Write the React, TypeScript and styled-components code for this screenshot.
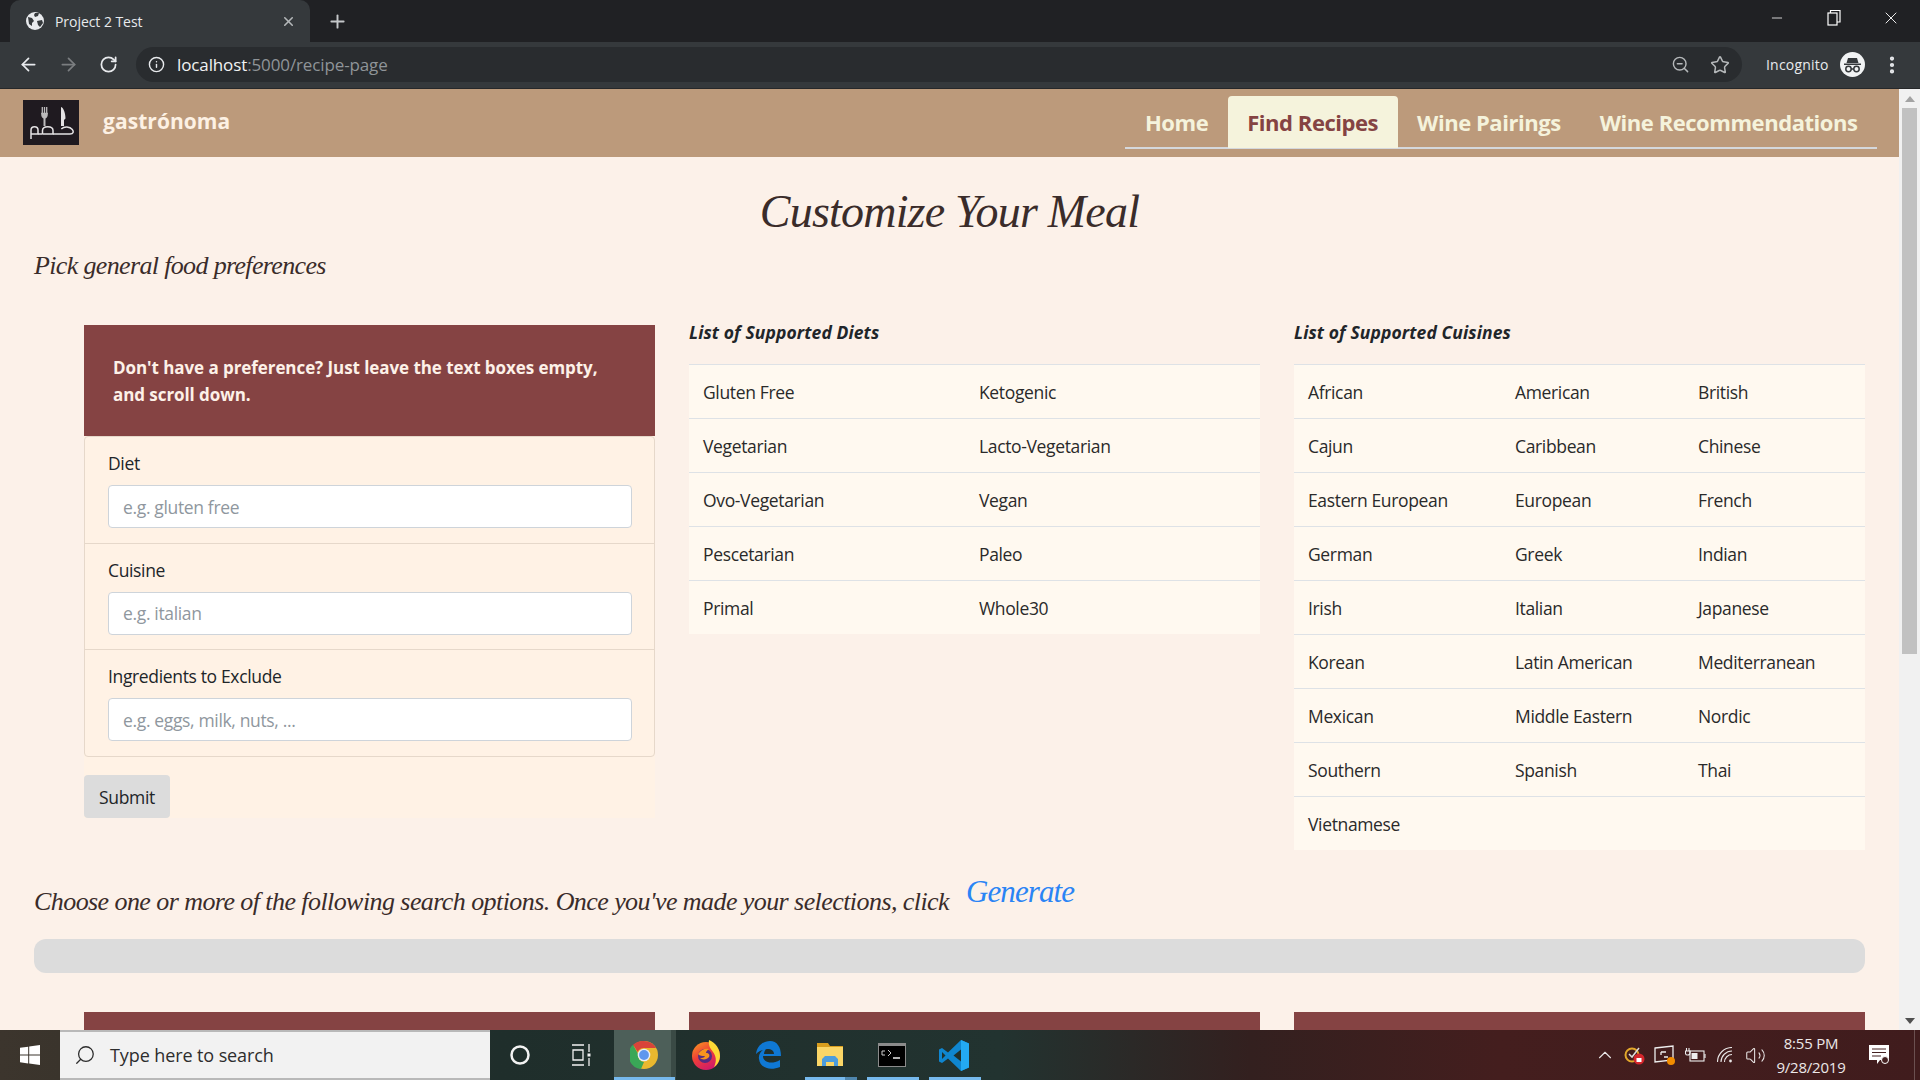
import React from 'react';
import styled, { createGlobalStyle } from 'styled-components';
import {
  ArrowLeft,
  ArrowRight,
  RotateCw,
  Info,
  ZoomOut,
  Star,
  Plus,
  X,
  Minus,
  Search,
  ChevronUp,
  Volume2,
  MoreVertical,
} from 'lucide-react';

const UI_FONT = '"Open Sans", "Noto Sans", sans-serif';
const SCRIPT_FONT = '"Liberation Serif", serif';

const GlobalStyle = createGlobalStyle`
  html, body { margin: 0; padding: 0; height: 100%; overflow: hidden; }
  body { font-family: ${UI_FONT}; background: #202124; }
  * { box-sizing: border-box; }
`;

const Screen = styled.div`
  display: flex;
  flex-direction: column;
  width: 1920px;
  height: 1080px;
  overflow: hidden;
`;

/* browser chrome */
const TabStrip = styled.div`
  display: flex;
  align-items: flex-end;
  height: 42px;
  background: #202124;
  color: #fff;
`;

const Tab = styled.div`
  display: flex;
  align-items: center;
  width: 300px;
  height: 42px;
  margin-left: 10px;
  padding: 0 14px 0 16px;
  background: #35393c;
  border-radius: 10px 10px 0 0;
  font-size: 14px;
  letter-spacing: -0.05px;
  gap: 11px;
`;

const TabTitle = styled.span`
  flex: 1;
  color: #e8eaed;
`;

const NewTab = styled.div`
  display: flex;
  align-items: center;
  justify-content: center;
  width: 54px;
  height: 42px;
  color: #c4c7c9;
`;

const WindowButtons = styled.div`
  display: flex;
  margin-left: auto;
  padding-right: 1px;
  height: 42px;
  padding-bottom: 6px;
`;

const WindowButton = styled.div`
  display: flex;
  align-items: center;
  justify-content: center;
  width: 57px;
  color: #fff;
`;

const Toolbar = styled.div`
  display: flex;
  align-items: center;
  height: 47px;
  padding-left: 8px;
  padding-bottom: 1px;
  background: #35393c;
  border-bottom: 1px solid #26282a;
`;

const NavIcon = styled.div<{ $dim?: boolean }>`
  display: flex;
  align-items: center;
  justify-content: center;
  width: 40px;
  color: ${p => (p.$dim ? '#7b7e80' : '#e8eaed')};
`;

const AddressBar = styled.div`
  display: flex;
  align-items: center;
  width: 1606px;
  height: 35px;
  margin-left: 8px;
  padding: 0 12px 0 12px;
  border-radius: 18px;
  background: #292c2f;
  font-size: 17px;
  letter-spacing: -0.12px;
`;

const Host = styled.span`
  margin-left: 12px;
  color: #f1f3f4;
`;

const UrlRest = styled.span`
  color: #8f9498;
`;

const AddressIcons = styled.div`
  display: flex;
  align-items: center;
  gap: 20px;
  margin-left: auto;
  color: #b5b8ba;
`;

const Profile = styled.div`
  display: flex;
  align-items: center;
  margin-left: 24px;
  color: #e8eaed;
  font-size: 14px;
  letter-spacing: 0.2px;
  gap: 11px;
`;

const Avatar = styled.div`
  display: flex;
  align-items: center;
  justify-content: center;
  width: 25px;
  height: 25px;
  border-radius: 50%;
  background: #f1f3f4;
`;

const MenuDots = styled.div`
  display: flex;
  margin-left: 16px;
  color: #e8eaed;
`;

/* page viewport */
const Viewport = styled.div`
  display: flex;
  height: 941px;
`;

const Page = styled.div`
  flex: 1;
  min-width: 0;
  overflow: hidden;
  background: #fcf1e9;
  color: #212529;
`;

const Scrollbar = styled.div`
  display: flex;
  flex-direction: column;
  align-items: center;
  width: 21px;
  background: #f1f1f1;
`;

const ScrollArrow = styled.div<{ $down?: boolean }>`
  width: 0;
  height: 0;
  margin: ${p => (p.$down ? 'auto 0 6px' : '7px 0 6px')};
  border-left: 5px solid transparent;
  border-right: 5px solid transparent;
  ${p => (p.$down ? 'border-top: 6px solid #505050;' : 'border-bottom: 6px solid #a3a3a3;')}
`;

const ScrollThumb = styled.div`
  width: 15px;
  height: 546px;
  background: #c1c1c1;
`;

const NavBar = styled.div`
  display: flex;
  align-items: center;
  height: 68px;
  padding: 0 22px 0 23px;
  background: #bc9a7b;
`;

const LogoMark = styled.svg`
  display: block;
  width: 56px;
  height: 45px;
  margin-top: -1px;
`;

const Brand = styled.div`
  margin-left: 24px;
  margin-top: -4px;
  color: #fdf1e4;
  font-size: 21px;
  font-weight: 700;
  letter-spacing: 0.05px;
`;

const NavTabs = styled.div`
  display: flex;
  align-self: flex-end;
  margin-left: auto;
  margin-bottom: 8px;
  height: 53px;
  border-bottom: 2px solid #d5d8dc;
`;

const NavTab = styled.div<{ $active?: boolean }>`
  display: flex;
  align-items: center;
  height: 52px;
  padding: 0 19.500px;
  border-radius: 4px 4px 0 0;
  font-size: 22px;
  font-weight: 700;
  letter-spacing: -0.45px;
  color: ${p => (p.$active ? '#854343' : '#f5f3dc')};
  background: ${p => (p.$active ? '#f5f3dc' : 'transparent')};
`;

const Content = styled.div`
  padding: 0 34px;
`;

const Title = styled.h1`
  margin: 0;
  padding-top: 24px;
  height: 89px;
  text-align: center;
  font-family: ${SCRIPT_FONT};
  font-style: italic;
  font-weight: 400;
  font-size: 46px;
  letter-spacing: -0.8px;
  line-height: 62px;
  color: #3a2c2a;
`;

const ScriptLine = styled.h3`
  margin: 0;
  display: flex;
  align-items: baseline;
  font-family: ${SCRIPT_FONT};
  font-style: italic;
  font-weight: 400;
  font-size: 26px;
  letter-spacing: -0.65px;
  line-height: 40px;
  color: #3a2c2a;
`;

const ChooseLine = styled(ScriptLine)`
  margin-top: 30px;
  letter-spacing: -0.57px;
`;

const GenerateLink = styled.a`
  position: relative;
  top: -8px;
  margin-left: 17px;
  font-size: 31px;
  letter-spacing: -0.9px;
  color: #2a84f5;
`;

const Columns = styled.div`
  display: grid;
  grid-template-columns: 571px 571px 571px;
  column-gap: 34px;
  margin-left: 50px;
`;

const TopColumns = styled(Columns)`
  margin-top: 39px;
`;

const FormColumn = styled.div`
  align-self: start;
  background: #fff2e5;
`;

const Banner = styled.div`
  padding: 29px 29px;
  height: 111px;
  background: #854343;
  color: #fdf1e8;
  font-size: 17px;
  font-weight: 700;
  line-height: 27px;
  letter-spacing: -0.07px;
`;

const FieldGroup = styled.div`
  display: flex;
  flex-direction: column;
  height: 321px;
  border: 1px solid #e6d8ca;
  border-radius: 4px;
`;

const Field = styled.div`
  flex: 1;
  padding: 13px 22px 0 23px;
  border-top: 1px solid #e6d8ca;
  &:first-child {
    border-top: 0;
  }
`;

const FieldLabel = styled.label`
  display: block;
  margin-bottom: 9px;
  font-size: 17.5px;
  line-height: 26px;
  letter-spacing: -0.35px;
`;

const TextInput = styled.input`
  display: block;
  width: 100%;
  height: 43px;
  padding: 0 14px;
  border: 1px solid #ced4da;
  border-radius: 4px;
  background: #fff;
  font-family: ${UI_FONT};
  font-size: 17.5px;
  letter-spacing: -0.35px;
  &::placeholder {
    color: #8f979e;
  }
`;

const SubmitButton = styled.button`
  display: block;
  margin-top: 18px;
  width: 86px;
  height: 43px;
  border: 0;
  border-radius: 4px;
  background: #dcdcdc;
  color: #212529;
  font-family: ${UI_FONT};
  font-size: 17.5px;
  letter-spacing: -0.35px;
`;

const ListHeading = styled.div`
  height: 39px;
  font-size: 17.5px;
  font-weight: 700;
  font-style: italic;
  line-height: 14px;
  letter-spacing: 0.1px;
`;

const ListTable = styled.div<{ $columns: string }>`
  display: grid;
  grid-template-columns: ${p => p.$columns};
  grid-auto-rows: 54px;
  background: #fff9f0;
`;

const ListCell = styled.div`
  display: flex;
  align-items: center;
  padding-left: 14px;
  border-top: 1px solid #dee2e6;
  font-size: 17.5px;
  letter-spacing: -0.35px;
  color: #2a2a2a;
`;

const ProgressTrack = styled.div`
  height: 34px;
  margin-top: 17px;
  border-radius: 12px;
  background: #dcdcdc;
`;

const NextRow = styled(Columns)`
  margin-top: 39px;
`;

const NextCard = styled.div`
  height: 18px;
  background: #854343;
`;

/* windows taskbar */
const Taskbar = styled.div`
  display: flex;
  align-items: stretch;
  height: 50px;
  background: linear-gradient(
    90deg,
    #3c352d 0,
    #3a342c 60px,
    #1f2e2b 500px,
    #223330 1000px,
    #33201f 1250px,
    #441e1e 1500px,
    #401c1d 1920px
  );
  color: #fff;
`;

const StartButton = styled.div`
  display: flex;
  align-items: center;
  justify-content: center;
  width: 60px;
`;

const SearchBox = styled.div`
  display: flex;
  align-items: center;
  width: 430px;
  padding-left: 14px;
  gap: 14px;
  background: #f2f2f2;
  border-top: 2px solid #b9b9b9;
  border-bottom: 2px solid #b9b9b9;
  color: #2d2d2d;
  font-size: 18px;
  letter-spacing: -0.1px;
`;

const MirroredIcon = styled.span`
  display: flex;
  transform: scaleX(-1);
`;

const SystemButton = styled.div<{ $width: number }>`
  display: flex;
  align-items: center;
  justify-content: center;
  width: ${p => p.$width}px;
`;

const TaskSlot = styled.div<{ $active?: boolean; $open?: boolean; $stacked?: boolean }>`
  position: relative;
  display: flex;
  align-items: center;
  justify-content: center;
  width: 62px;
  padding-right: 2px;
  background: ${p =>
    p.$active ? 'linear-gradient(90deg, #4d5f59 0, #4d5f59 57px, #3a4a45 57px)' : 'transparent'};
  &::after {
    content: '';
    display: ${p => (p.$open ? 'block' : 'none')};
    position: absolute;
    left: ${p => (p.$active ? 0 : 5)}px;
    right: ${p => (p.$active ? 1 : 5)}px;
    bottom: 0;
    height: 3px;
    background: ${p =>
      p.$stacked ? 'linear-gradient(90deg, #76b9ed 0, #76b9ed 40px, #4f86ad 40px)' : '#76b9ed'};
  }
`;

const TaskIcons = styled.div`
  display: flex;
  align-items: stretch;
`;

const Tray = styled.div`
  display: flex;
  align-items: center;
  margin-left: auto;
`;

const TrayIcon = styled.div`
  display: flex;
  align-items: center;
  justify-content: center;
  width: 30px;
  color: #e9e6e6;
`;

const Clock = styled.div`
  width: 82px;
  text-align: center;
  font-size: 15px;
  line-height: 24px;
  letter-spacing: -0.2px;
  color: #ece8e8;
`;

const NoticeIcon = styled.div`
  display: flex;
  margin-left: 11px;
  width: 32px;
  justify-content: center;
`;

const ShowDesktop = styled.div`
  align-self: stretch;
  width: 6px;
  margin-left: 19px;
  border-left: 1px solid #6b5050;
`;

const diets = [
  ['Gluten Free', 'Ketogenic'],
  ['Vegetarian', 'Lacto-Vegetarian'],
  ['Ovo-Vegetarian', 'Vegan'],
  ['Pescetarian', 'Paleo'],
  ['Primal', 'Whole30'],
];

const cuisines = [
  ['African', 'American', 'British'],
  ['Cajun', 'Caribbean', 'Chinese'],
  ['Eastern European', 'European', 'French'],
  ['German', 'Greek', 'Indian'],
  ['Irish', 'Italian', 'Japanese'],
  ['Korean', 'Latin American', 'Mediterranean'],
  ['Mexican', 'Middle Eastern', 'Nordic'],
  ['Southern', 'Spanish', 'Thai'],
  ['Vietnamese', '', ''],
];

const fields = [
  { label: 'Diet', placeholder: 'e.g. gluten free' },
  { label: 'Cuisine', placeholder: 'e.g. italian' },
  { label: 'Ingredients to Exclude', placeholder: 'e.g. eggs, milk, nuts, ...' },
];

const GlobeIcon = () => (
  <svg width="18" height="18" viewBox="0 0 18 18">
    <circle cx="9" cy="9" r="9" fill="#e8eaed" />
    <path d="M2 5l4 1 2 3-2 2v3L3 12zM9 1h4l-1 3-3 1-1-2zM11 9l5-1 1 3-3 4-2-2z" fill="#35393c" />
  </svg>
);

const Logo = () => (
  <LogoMark viewBox="0 0 56 45">
    <rect width="56" height="45" fill="#1f1a20" />
    <g fill="none" stroke="#bdbbbd" strokeWidth="1.300">
      <path d="M19.300 7v7M21.500 7v7M23.700 7v7" />
      <path d="M18.800 13.500c0 3 1.200 4.500 2.700 4.500s2.700-1.500 2.700-4.500z" fill="#bdbbbd" />
      <path d="M21.500 18v8" strokeWidth="2" />
    </g>
    <path d="M38 7c3 1 4.500 7 4.500 11.500L41 20v6h-3z" fill="#e4e2e4" />
    <g fill="none" stroke="#e4e2e4" strokeWidth="1.500" strokeLinejoin="round">
      <path d="M8 39V30c0-4.500 7-4.500 7 0v4H8.500" />
      <path d="M15 34h4.500" />
      <path d="M19.500 34v-3.500c0-5 10.500-5 10.500 0V34H19.500" />
      <path d="M30 34h17c3.500 0 4-2.500 2.300-4.500-2.500-3-8-3.500-11-.500" />
    </g>
  </LogoMark>
);

const IncognitoIcon = () => (
  <svg width="19" height="19" viewBox="0 0 19 19">
    <path d="M5 3h9l1.500 5H3.500zM1 8.500h17v1.500H1z" fill="#35393c" />
    <circle cx="5.500" cy="14" r="2.700" fill="none" stroke="#35393c" strokeWidth="1.500" />
    <circle cx="13.500" cy="14" r="2.700" fill="none" stroke="#35393c" strokeWidth="1.500" />
    <path d="M8 14h3" stroke="#35393c" strokeWidth="1.500" />
  </svg>
);

const RestoreIcon = () => (
  <svg width="14" height="20" viewBox="0 0 14 20" fill="none" stroke="#fff" strokeWidth="1.200">
    <rect x="1" y="5" width="9" height="12" />
    <path d="M3.500 5V2.500H13V14h-3" />
  </svg>
);

const WindowsLogo = () => (
  <svg width="20" height="20" viewBox="0 0 20 20" fill="#fff">
    <path d="M0 2.800l8.200-1.100v7.900H0zM9.200 1.500L20 0v9.600H9.200zM0 10.500h8.200v7.900L0 17.200zM9.200 10.500H20V20L9.200 18.500z" />
  </svg>
);

const CortanaIcon = () => (
  <svg width="22" height="22" viewBox="0 0 22 22">
    <circle cx="11" cy="11" r="8.500" fill="none" stroke="#f2f2f2" strokeWidth="2.500" />
  </svg>
);

const TaskViewIcon = () => (
  <svg width="20" height="22" viewBox="0 0 20 22" fill="none" stroke="#f2f2f2" strokeWidth="1.300">
    <path d="M0 1h12M0 21h12M1 6h10v10H1zM17 0v8M17 14v8" />
    <rect x="15.500" y="9.500" width="3" height="3" fill="#f2f2f2" stroke="none" />
  </svg>
);

const ChromeIcon = () => (
  <svg width="28" height="28" viewBox="0 0 28 28">
    <circle cx="14" cy="14" r="14" fill="#e9b82f" />
    <path d="M14 0a14 14 0 0 1 12.100 7H14a7 7 0 0 0-6.300 4L3 3.800A14 14 0 0 1 14 0z" fill="#d9443a" />
    <path d="M3 3.800l5 8.900a7 7 0 0 0 6 8.300L11 28A14 14 0 0 1 3 3.800z" fill="#3aa757" />
    <circle cx="14" cy="14" r="6.300" fill="#e8eef8" />
    <circle cx="14" cy="14" r="4.900" fill="#5f97ee" />
  </svg>
);

const FirefoxIcon = () => (
  <svg width="28" height="30" viewBox="0 0 28 30">
    <defs>
      <linearGradient id="fx" x1="0" y1="0" x2="0.600" y2="1">
        <stop offset="0" stopColor="#f9a01f" />
        <stop offset="0.500" stopColor="#ef3f37" />
        <stop offset="1" stopColor="#d11a6b" />
      </linearGradient>
    </defs>
    <circle cx="14" cy="16" r="14" fill="url(#fx)" />
    <path d="M17 0c7 3 11 9 11 16 0 5-3 9-6 11 3-6 2-11-1-15-2-3-5-6-4-12z" fill="#fdd835" />
    <circle cx="13" cy="16" r="7" fill="#3b2a8c" opacity="0.850" />
    <path d="M6 14c3-5 8-6 11-5-2 1-3 3-3 4 3 0 4 2 3 4-2 3-7 3-9 1 2 0 4 0 5-2-3 0-5 0-7-2z" fill="#f7941e" />
  </svg>
);

const EdgeIcon = () => (
  <svg width="26" height="28" viewBox="0 0 26 28">
    <path
      d="M1 13C2 5 8 0 15 0c7 0 11 6 11 15H8c0 6 8 9 17 4v7c-10 4-20 1-21-8-1-5 3-10 8-11-2 2-3 4-3 6h10c0-6-10-7-18 0z"
      fill="#0f78d4"
    />
  </svg>
);

const FolderIcon = () => (
  <svg width="28" height="26" viewBox="0 0 28 26">
    <path d="M1 1h11l2 3h13v4H1z" fill="#d99e1e" />
    <path d="M1 5h26v19H1z" fill="#fbd667" />
    <path d="M9 14h10l3 3v7h-4v-4h-8v4H6v-7z" fill="#4d9ddd" />
    <path d="M11 20h6v4h-6z" fill="#fbd667" />
  </svg>
);

const ConsoleIcon = () => (
  <svg width="28" height="24" viewBox="0 0 28 24">
    <rect width="28" height="24" fill="#8b8b8b" />
    <rect x="1" y="3" width="26" height="20" fill="#000" />
    <path d="M4 8h3M4 8v4h3M10 7l3 3-3 3" fill="none" stroke="#ccc" strokeWidth="1" />
    <path d="M15 15h7" stroke="#eee" strokeWidth="1.500" />
  </svg>
);

const VsCodeIcon = () => (
  <svg width="30" height="31" viewBox="0 0 30 31">
    <path d="M22 0l8 3.500v24L22 31 9 18.500 3 23l-3-1.500v-12L3 8l6 4.500z" fill="#0f86d0" />
    <path d="M22 0l8 3.500v24L22 31z" fill="#23a9f2" />
    <path d="M22 9.500l-7.500 6 7.500 6z" fill="#1f302c" />
    <path d="M3 12v7l3.500-3.500z" fill="#1f302c" />
  </svg>
);

const NortonIcon = () => (
  <svg width="22" height="20" viewBox="0 0 22 20">
    <circle cx="8" cy="10" r="6.500" fill="none" stroke="#e3a82b" strokeWidth="2" />
    <path d="M5 9l3 3 7-9" fill="none" stroke="#ddd" strokeWidth="1.500" />
    <circle cx="15" cy="14" r="5.500" fill="#d5262c" />
    <rect x="12.500" y="13" width="5" height="4" fill="#fff" />
  </svg>
);

const ScreenIcon = () => (
  <svg width="22" height="21" viewBox="0 0 22 21">
    <path d="M1 3l18-2v14L1 17z" fill="none" stroke="#eee" strokeWidth="1.300" />
    <path d="M7 7h5M7 7v3M10 12h4" stroke="#eee" strokeWidth="1.300" />
    <circle cx="17" cy="16" r="4" fill="#f28c00" />
  </svg>
);

const BatteryIcon = () => (
  <svg width="21" height="14" viewBox="0 0 21 14" fill="none" stroke="#eee" strokeWidth="1.100">
    <rect x="5" y="3" width="14" height="10" />
    <rect x="6.500" y="5" width="6" height="6" fill="#eee" stroke="none" />
    <path d="M20 6v4M1.500 0v3M4 0v3M0.500 3h4.500v2c0 1.500-1 2-2.250 2S.5 6.500.5 5z" />
  </svg>
);

const WifiArcs = () => (
  <svg width="16" height="16" viewBox="0 0 16 16" fill="none" stroke="#e9e6e6" strokeWidth="1.100">
    <path d="M.5 15C.5 7 7 .5 15 .5M4 15C4 9 9 4 15 4M7.500 15c0-4 3.500-7.500 7.500-7.500" />
    <circle cx="13.500" cy="14" r="1.400" fill="#e9e6e6" stroke="none" />
  </svg>
);

const NoticeGlyph = () => (
  <svg width="21" height="20" viewBox="0 0 21 20">
    <path d="M0 0h20v15H11l-3 4v-4H0z" fill="#fff" />
    <path d="M3 4h14M3 7.500h14M3 11h9" stroke="#442020" strokeWidth="1" />
    <circle cx="16" cy="15" r="3.500" fill="#442020" stroke="#fff" strokeWidth="1" />
  </svg>
);

export default function App() {
  return (
    <Screen>
      <GlobalStyle />
      <TabStrip>
        <Tab>
          <GlobeIcon />
          <TabTitle>Project 2 Test</TabTitle>
          <X size={15} color="#b5b8ba" strokeWidth={2.5} />
        </Tab>
        <NewTab>
          <Plus size={21} strokeWidth={2.2} />
        </NewTab>
        <WindowButtons>
          <WindowButton>
            <Minus size={16} strokeWidth={1.2} />
          </WindowButton>
          <WindowButton>
            <RestoreIcon />
          </WindowButton>
          <WindowButton>
            <X size={20} strokeWidth={1.1} />
          </WindowButton>
        </WindowButtons>
      </TabStrip>
      <Toolbar>
        <NavIcon>
          <ArrowLeft size={21} strokeWidth={2} />
        </NavIcon>
        <NavIcon $dim>
          <ArrowRight size={21} strokeWidth={2} />
        </NavIcon>
        <NavIcon>
          <RotateCw size={19} strokeWidth={2.2} />
        </NavIcon>
        <AddressBar>
          <Info size={17} color="#e8eaed" strokeWidth={2} />
          <Host>localhost</Host>
          <UrlRest>:5000/recipe-page</UrlRest>
          <AddressIcons>
            <ZoomOut size={19} strokeWidth={1.8} />
            <Star size={20} strokeWidth={1.8} />
          </AddressIcons>
        </AddressBar>
        <Profile>
          Incognito
          <Avatar>
            <IncognitoIcon />
          </Avatar>
        </Profile>
        <MenuDots>
          <MoreVertical size={22} strokeWidth={2.6} />
        </MenuDots>
      </Toolbar>
      <Viewport>
        <Page>
          <NavBar>
            <Logo />
            <Brand>gastrónoma</Brand>
            <NavTabs>
              <NavTab>Home</NavTab>
              <NavTab $active>Find Recipes</NavTab>
              <NavTab>Wine Pairings</NavTab>
              <NavTab>Wine Recommendations</NavTab>
            </NavTabs>
          </NavBar>
          <Content>
            <Title>Customize Your Meal</Title>
            <ScriptLine>Pick general food preferences</ScriptLine>
            <TopColumns>
              <FormColumn>
                <Banner>
                  Don't have a preference? Just leave the text boxes empty,
                  <br />
                  and scroll down.
                </Banner>
                <FieldGroup>
                  {fields.map(field => (
                    <Field key={field.label}>
                      <FieldLabel>{field.label}</FieldLabel>
                      <TextInput placeholder={field.placeholder} />
                    </Field>
                  ))}
                </FieldGroup>
                <SubmitButton>Submit</SubmitButton>
              </FormColumn>
              <div>
                <ListHeading>List of Supported Diets</ListHeading>
                <ListTable $columns="276px 295px">
                  {diets.flat().map(name => (
                    <ListCell key={name}>{name}</ListCell>
                  ))}
                </ListTable>
              </div>
              <div>
                <ListHeading>List of Supported Cuisines</ListHeading>
                <ListTable $columns="207px 183px 181px">
                  {cuisines.flat().map((name, index) => (
                    <ListCell key={index}>{name}</ListCell>
                  ))}
                </ListTable>
              </div>
            </TopColumns>
            <ChooseLine>
              Choose one or more of the following search options. Once you've made your selections, click
              <GenerateLink>Generate</GenerateLink>
            </ChooseLine>
            <ProgressTrack />
            <NextRow>
              <NextCard />
              <NextCard />
              <NextCard />
            </NextRow>
          </Content>
        </Page>
        <Scrollbar>
          <ScrollArrow />
          <ScrollThumb />
          <ScrollArrow $down />
        </Scrollbar>
      </Viewport>
      <Taskbar>
        <StartButton>
          <WindowsLogo />
        </StartButton>
        <SearchBox>
          <MirroredIcon>
            <Search size={22} strokeWidth={1.4} />
          </MirroredIcon>
          Type here to search
        </SearchBox>
        <SystemButton $width={60}>
          <CortanaIcon />
        </SystemButton>
        <SystemButton $width={64}>
          <TaskViewIcon />
        </SystemButton>
        <TaskIcons>
          <TaskSlot $active $open>
            <ChromeIcon />
          </TaskSlot>
          <TaskSlot>
            <FirefoxIcon />
          </TaskSlot>
          <TaskSlot>
            <EdgeIcon />
          </TaskSlot>
          <TaskSlot $open $stacked>
            <FolderIcon />
          </TaskSlot>
          <TaskSlot $open>
            <ConsoleIcon />
          </TaskSlot>
          <TaskSlot $open>
            <VsCodeIcon />
          </TaskSlot>
        </TaskIcons>
        <Tray>
          <TrayIcon>
            <ChevronUp size={22} strokeWidth={1.2} />
          </TrayIcon>
          <TrayIcon>
            <NortonIcon />
          </TrayIcon>
          <TrayIcon>
            <ScreenIcon />
          </TrayIcon>
          <TrayIcon>
            <BatteryIcon />
          </TrayIcon>
          <TrayIcon>
            <WifiArcs />
          </TrayIcon>
          <TrayIcon>
            <Volume2 size={21} strokeWidth={1.2} />
          </TrayIcon>
          <Clock>
            8:55 PM
            <br />
            9/28/2019
          </Clock>
          <NoticeIcon>
            <NoticeGlyph />
          </NoticeIcon>
          <ShowDesktop />
        </Tray>
      </Taskbar>
    </Screen>
  );
}
